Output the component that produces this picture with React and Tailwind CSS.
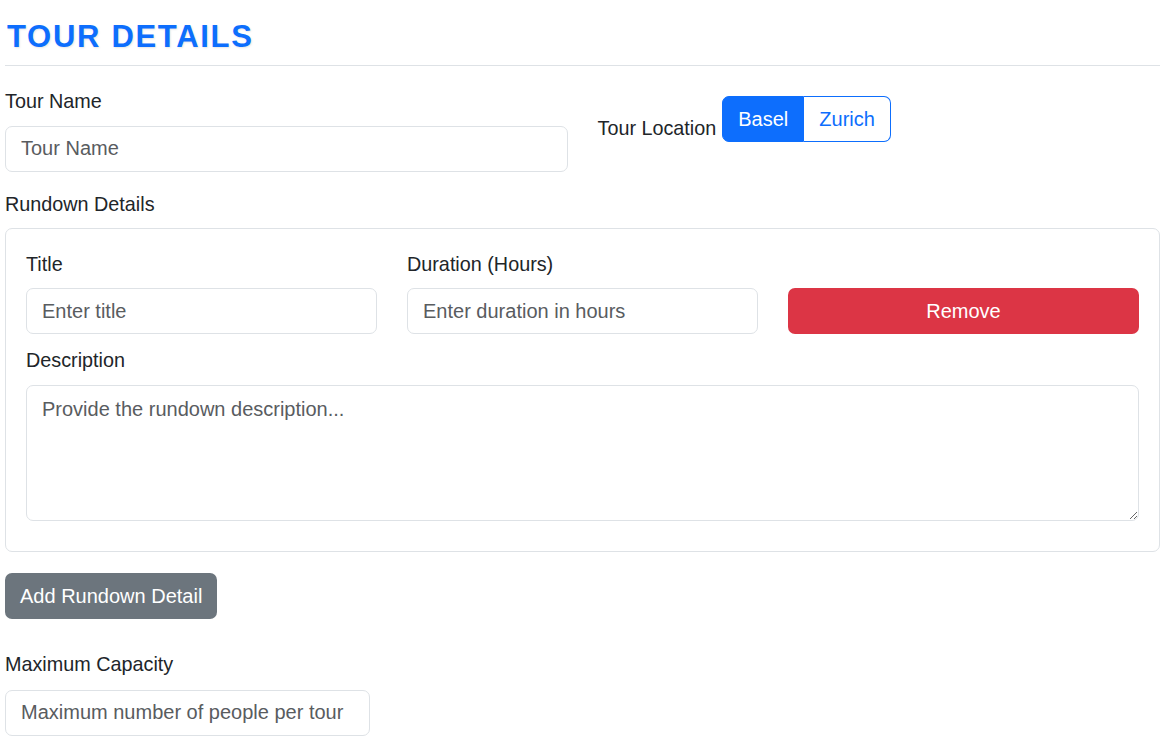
import React from 'react';

const inputCls =
  'block w-full h-[46px] px-[15px] border border-[#dee2e6] rounded-[7px] bg-white text-[20px] text-[#212529] placeholder:text-[#595c5f] outline-none';

function Label({ children, className = '' }) {
  return <label className={`block text-[19.8px] leading-[28.8px] text-[#212529] ${className}`}>{children}</label>;
}

export default function App() {
  return (
    <div className="min-h-screen bg-white px-[5px] font-['Liberation_Sans',Arial,sans-serif] text-[#212529]">
      <h3 className="mt-[18px] ml-[2px] text-[31px] leading-[37px] font-bold tracking-[1.7px] text-[#0d6efd] [text-shadow:1px_1px_2px_rgba(0,0,0,0.1)]">
        TOUR DETAILS
      </h3>
      <hr className="mt-[10px] border-0 border-t border-[#dee2e6]" />

      <div className="mt-[21px] grid grid-cols-2 gap-x-[30px]">
        <div>
          <Label className="mb-[10px]">Tour Name</Label>
          <input className={inputCls} placeholder="Tour Name" />
        </div>
        <div className="flex items-start pt-[9px]">
          <Label className="mt-[18px] mr-[6px]">Tour Location</Label>
          <div className="flex h-[46px] text-[20px]">
            <button className="px-[15px] rounded-l-[7px] border border-[#0d6efd] bg-[#0d6efd] text-white">Basel</button>
            <button className="px-[15px] rounded-r-[7px] border border-l-0 border-[#0d6efd] bg-white text-[#0d6efd]">Zurich</button>
          </div>
        </div>
      </div>

      <Label className="mt-[18px] mb-[9px]">Rundown Details</Label>
      <div className="border border-[#dee2e6] rounded-[7px] px-[20px] pt-[21px] pb-[30px]">
        <div className="grid grid-cols-3 gap-x-[30px] items-end">
          <div>
            <Label className="mb-[10px]">Title</Label>
            <input className={inputCls} placeholder="Enter title" />
          </div>
          <div>
            <Label className="mb-[10px]">Duration (Hours)</Label>
            <input className={inputCls} placeholder="Enter duration in hours" />
          </div>
          <button className="h-[46px] w-full rounded-[7px] bg-[#dc3545] text-white text-[20px]">Remove</button>
        </div>
        <Label className="mt-[12px] mb-[10px]">Description</Label>
        <textarea
          className="block w-full h-[136px] px-[15px] py-[9px] border border-[#dee2e6] rounded-[7px] text-[20px] leading-[28.8px] placeholder:text-[#595c5f] outline-none"
          placeholder="Provide the rundown description..."
        />
      </div>

      <button className="mt-[21px] h-[46px] px-[15px] rounded-[7px] bg-[#6c757d] text-white text-[20px]">
        Add Rundown Detail
      </button>

      <Label className="mt-[31px] mb-[11px]">Maximum Capacity</Label>
      <div className="w-[365px]">
        <input className={inputCls} placeholder="Maximum number of people per tour" />
      </div>
    </div>
  );
}
